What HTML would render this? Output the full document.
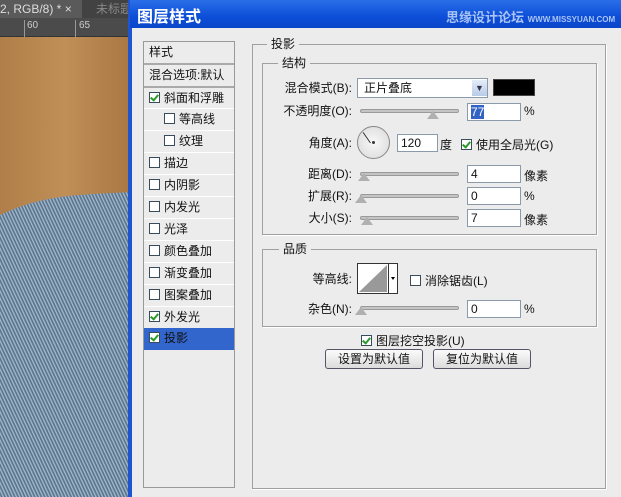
<!DOCTYPE html>
<html><head><meta charset="utf-8"><style>
*{margin:0;padding:0;box-sizing:border-box}
body{width:621px;height:497px;overflow:hidden;position:relative;background:#ececec;font-family:"Liberation Sans","Noto Sans CJK SC",sans-serif;font-size:12px;color:#111}
.a{position:absolute}
.box{position:absolute;border:1px solid #a0a0a0;box-shadow:1px 1px 0 #fff}
.lg{position:absolute;background:#ececec;padding:0 4px;font-size:12px;line-height:14px}
.row{position:absolute;left:144px;width:90px;height:22px;border-top:1px solid #fff;line-height:21px;font-size:12px}
.cb{display:inline-block;width:11px;height:11px;border:1px solid #3a4b5c;background:#fff;vertical-align:-1px;margin-right:4px;position:relative}
.cb.on::after{content:"";position:absolute;left:2px;top:0px;width:3px;height:6px;border:solid #2a9a2a;border-width:0 2px 2px 0;transform:rotate(40deg)}
.lab{position:absolute;text-align:right;width:120px;line-height:14px}
.sl{position:absolute;height:4px;border-radius:2px;background:#c4c4c4;border:1px solid #9a9a9a;width:99px;left:360px}
.th{position:absolute;width:0;height:0;border-left:6px solid transparent;border-right:6px solid transparent;border-bottom:8px solid #b0b0b0}
.in{position:absolute;left:467px;width:54px;height:18px;border:1px solid #8a9aab;background:#fff;padding-left:3px;line-height:16px}
.btn{position:absolute;height:20px;border:1px solid #556;border-radius:3px;background:linear-gradient(#fbfbfb,#dcdcdc);text-align:center;line-height:18px}
</style></head><body>
<div class="a" style="left:0;top:0;width:130px;height:18px;background:#424242"></div>
<div class="a" style="left:0;top:0;width:82px;height:18px;background:#5a5a5a;color:#ddd;line-height:18px;font-size:12px;white-space:nowrap">2, RGB/8) * ×</div>
<div class="a" style="left:96px;top:0;color:#888;line-height:18px">未标题</div>
<div class="a" style="left:0;top:18px;width:130px;height:19px;background:#4b4b4b;border-bottom:1px solid #333"></div>
<div class="a" style="left:27px;top:20px;color:#ccc;font-size:10px">60</div>
<div class="a" style="left:79px;top:20px;color:#ccc;font-size:10px">65</div>
<div class="a" style="left:24px;top:20px;width:1px;height:17px;background:#999"></div>
<div class="a" style="left:75px;top:20px;width:1px;height:17px;background:#999"></div>
<div class="a" style="left:0;top:37px;width:130px;height:460px;background:linear-gradient(90deg,#b07e48,#c08f58 50%,#a97843)"></div>
<svg class="a" style="left:0;top:37px" width="130" height="460">
<defs><pattern id="d" width="3" height="3" patternUnits="userSpaceOnUse" patternTransform="rotate(-25)"><rect width="3" height="3" fill="#5a7590"/><rect width="1.3" height="3" fill="#a6b9c9"/></pattern></defs>
<path d="M0 178 C25 166 50 160 80 158 C105 156 120 156 130 155 L130 460 L0 460Z" fill="url(#d)"/>
</svg>
<div class="a" style="left:128px;top:0;width:4px;height:497px;background:#1f55d0"></div>
<div class="a" style="left:130px;top:0;width:491px;height:28px;background:linear-gradient(#2a6fe8,#0d4ed8 60%,#0a46c8)"></div>
<div class="a" style="left:137px;top:3px;color:#fff;font-weight:bold;font-size:16px">图层样式</div>
<div class="a" style="left:446px;top:7px;color:#a9c4f5;font-size:13px;font-weight:bold;white-space:nowrap">思缘设计论坛 <span style="font-size:8px">WWW.MISSYUAN.COM</span></div>
<div class="a" style="left:143px;top:41px;width:92px;height:447px;border:1px solid #999;background:#ececec"></div>
<div class="row" style="top:42px;padding-left:5px;border:0">样式</div>
<div class="row" style="top:63px;padding-left:5px;border-top:2px solid #aaa">混合选项:默认</div>
<div class="row" style="top:86px;padding-left:5px;border-top:2px solid #aaa"><span class="cb on"></span>斜面和浮雕</div>
<div class="row" style="top:108px;padding-left:20px"><span class="cb"></span>等高线</div>
<div class="row" style="top:130px;padding-left:20px"><span class="cb"></span>纹理</div>
<div class="row" style="top:152px;padding-left:5px"><span class="cb"></span>描边</div>
<div class="row" style="top:174px;padding-left:5px"><span class="cb"></span>内阴影</div>
<div class="row" style="top:196px;padding-left:5px"><span class="cb"></span>内发光</div>
<div class="row" style="top:218px;padding-left:5px"><span class="cb"></span>光泽</div>
<div class="row" style="top:240px;padding-left:5px"><span class="cb"></span>颜色叠加</div>
<div class="row" style="top:262px;padding-left:5px"><span class="cb"></span>渐变叠加</div>
<div class="row" style="top:284px;padding-left:5px"><span class="cb"></span>图案叠加</div>
<div class="row" style="top:306px;padding-left:5px"><span class="cb on"></span>外发光</div>
<div class="row" style="top:328px;padding-left:5px;background:#3366cc;border:0"><span class="cb on"></span>投影</div>
<div class="box" style="left:252px;top:44px;width:354px;height:445px"></div>
<div class="lg" style="left:267px;top:37px">投影</div>
<div class="box" style="left:262px;top:63px;width:335px;height:172px"></div>
<div class="lg" style="left:278px;top:56px">结构</div>
<div class="box" style="left:262px;top:249px;width:335px;height:78px"></div>
<div class="lg" style="left:279px;top:242px">品质</div>
<div class="lab" style="left:232px;top:81px">混合模式(B):</div>
<div class="a" style="left:357px;top:78px;width:131px;height:20px;border:1px solid #8a9aab;background:#fff;padding-left:6px;line-height:18px">正片叠底</div>
<div class="a" style="left:472px;top:80px;width:15px;height:16px;background:linear-gradient(#e4ecf8,#b8cbe8);color:#335;font-size:9px;text-align:center;line-height:16px">▼</div>
<div class="a" style="left:493px;top:79px;width:42px;height:17px;background:#000;border:1px solid #444"></div>
<div class="lab" style="left:232px;top:104px">不透明度(O):</div>
<div class="sl" style="top:109px"></div><div class="th" style="left:427px;top:111px"></div>
<div class="in" style="top:103px"><span style="background:#3163c5;color:#fff">77</span></div>
<div class="a" style="left:524px;top:104px">%</div>
<div class="lab" style="left:232px;top:136px">角度(A):</div>
<div class="a" style="left:357px;top:126px;width:33px;height:33px;border-radius:50%;border:1px solid #888;background:radial-gradient(#f8f8f8,#d8d8d8)"></div>
<div class="a" style="left:370px;top:130px;width:1px;height:13px;background:#333;transform:rotate(-35deg);transform-origin:bottom"></div>
<div class="a" style="left:372px;top:141px;width:3px;height:3px;background:#333;border-radius:50%"></div>
<div class="in" style="left:397px;width:41px;top:134px">120</div>
<div class="a" style="left:440px;top:136px">度</div>
<div class="a" style="left:461px;top:136px"><span class="cb on"></span>使用全局光(G)</div>
<div class="lab" style="left:232px;top:167px">距离(D):</div>
<div class="sl" style="top:172px"></div><div class="th" style="left:358px;top:173px"></div>
<div class="in" style="top:165px">4</div><div class="a" style="left:524px;top:167px">像素</div>
<div class="lab" style="left:232px;top:189px">扩展(R):</div>
<div class="sl" style="top:194px"></div><div class="th" style="left:355px;top:195px"></div>
<div class="in" style="top:187px">0</div><div class="a" style="left:524px;top:189px">%</div>
<div class="lab" style="left:232px;top:211px">大小(S):</div>
<div class="sl" style="top:216px"></div><div class="th" style="left:361px;top:217px"></div>
<div class="in" style="top:209px">7</div><div class="a" style="left:524px;top:211px">像素</div>
<div class="lab" style="left:232px;top:272px">等高线:</div>
<svg class="a" style="left:357px;top:263px" width="41" height="31"><rect x="0.5" y="0.5" width="40" height="30" fill="#fff" stroke="#333"/><path d="M2 29 L30 2 L30 29Z" fill="#999"/><line x1="31.5" y1="0" x2="31.5" y2="31" stroke="#333"/><path d="M34 14 L38 14 L36 17Z" fill="#000"/></svg>
<div class="a" style="left:410px;top:272px"><span class="cb"></span>消除锯齿(L)</div>
<div class="lab" style="left:232px;top:302px">杂色(N):</div>
<div class="sl" style="top:306px"></div><div class="th" style="left:355px;top:307px"></div>
<div class="in" style="top:300px">0</div><div class="a" style="left:524px;top:302px">%</div>
<div class="a" style="left:361px;top:332px"><span class="cb on"></span>图层挖空投影(U)</div>
<div class="btn" style="left:325px;top:349px;width:98px">设置为默认值</div>
<div class="btn" style="left:433px;top:349px;width:98px">复位为默认值</div>
</body></html>
